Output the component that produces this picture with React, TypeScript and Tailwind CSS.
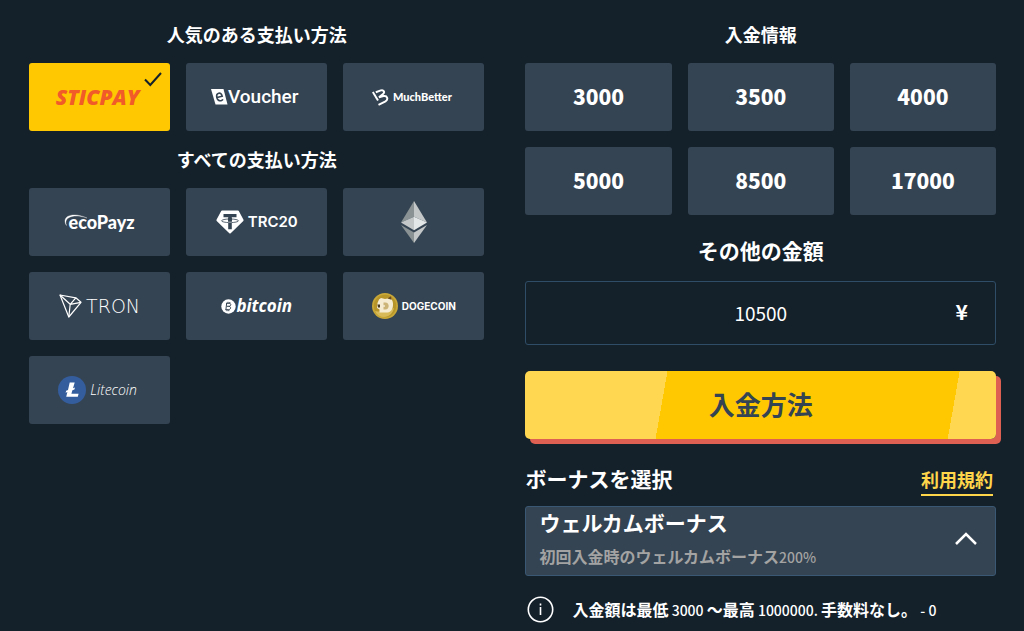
import { ReactNode, useState } from "react";
import clsx from "clsx";

interface PaymentMethod {
    id: string;
    label: string;
    logo: ReactNode;
}

interface SectionTitleProps {
    children: ReactNode;
}

interface MethodGridProps {
    methods: PaymentMethod[];
    selected: string;
    onSelect: (id: string) => void;
}

const AMOUNTS = [3000, 3500, 4000, 5000, 8500, 17000];

const popularMethods: PaymentMethod[] = [
    {
        id: "sticpay",
        label: "STICPAY",
        logo: (
            <span className="pr-1 font-['Open_Sans',sans-serif] text-[21px] leading-6 font-extrabold italic text-[#f15a29]">
                STICPAY
            </span>
        ),
    },
    {
        id: "evoucher",
        label: "eVoucher",
        logo: (
            <span className="flex items-center pr-1">
                <svg width="17" height="16" viewBox="0 0 17 16" fill="none" aria-hidden="true">
                    <path d="M0 0h12.5L16.500 15.500H4.500Z" fill="#fff" />
                    <path
                        d="M6 8.600 11.200 7.200C10.600 4.800 9.200 3.800 7.700 4.200 5.900 4.700 5.300 6.500 5.900 8.700c.6 2.300 2.300 3.500 4.100 3 .9-.2 1.600-.7 2-1.300"
                        stroke="#354452"
                        strokeWidth="1.600"
                    />
                </svg>
                <span className="font-['Roboto',sans-serif] text-[19px] leading-6 font-medium">Voucher</span>
            </span>
        ),
    },
    {
        id: "muchbetter",
        label: "MuchBetter",
        logo: (
            <span className="flex items-center gap-1 pr-1">
                <svg width="17" height="17" viewBox="0 0 17 17" fill="none" stroke="#fff" strokeWidth="2" aria-hidden="true">
                    <path d="M.8 3 6 11.500" />
                    <path d="M3.800 3.200 8.800 1.400c3-1 4.300 2 2.200 3.600L7 8.300l4.500-1.200c4-.7 5 3.400 2 5.200L6.500 15.800" />
                </svg>
                <span className="font-['Lato',sans-serif] text-[11px] leading-4 font-black">MuchBetter</span>
            </span>
        ),
    },
];

const allMethods: PaymentMethod[] = [
    {
        id: "ecopayz",
        label: "ecoPayz",
        logo: (
            <span className="relative pl-1 font-['Lato',sans-serif] text-[18px] leading-6 font-black">
                <svg className="absolute top-1 left-0" width="24" height="13" viewBox="0 0 24 13" fill="none" aria-hidden="true">
                    <path d="M2.500 11.500C-3.500 2 9-2.500 23 4 11-.2-1 2.500 2.500 11.500Z" fill="#fff" stroke="#fff" strokeWidth=".3" />
                </svg>
                ecoPayz
            </span>
        ),
    },
    {
        id: "trc20",
        label: "TRC20",
        logo: (
            <span className="flex items-center gap-1">
                <svg width="28" height="24" viewBox="0 0 28 24" aria-hidden="true">
                    <path d="M6 .5h16a1 1 0 0 1 .8.5l4.700 8.800a1 1 0 0 1-.2 1.100L14.700 23.200a1 1 0 0 1-1.400 0L.7 10.900a1 1 0 0 1-.2-1.100L5.200 1A1 1 0 0 1 6 .5Z" fill="#fff" />
                    <path d="M7.500 4h13v3.300h-4.700v12h-3.600v-12H7.500Z" fill="#354452" />
                    <ellipse cx="14" cy="10.800" rx="8.500" ry="1.800" fill="none" stroke="#354452" strokeWidth=".8" />
                    <path d="M12.200 8h3.600v3.500h-3.600Z" fill="#354452" />
                    <path d="M12.200 11.800h3.600v.6h-3.600Z" fill="#fff" />
                </svg>
                <span className="font-['Inter',sans-serif] text-[15px] leading-6 font-semibold">TRC20</span>
            </span>
        ),
    },
    {
        id: "ethereum",
        label: "Ethereum",
        logo: (
            <svg width="26" height="42" viewBox="0 0 26 42" aria-hidden="true">
                <path d="M13 0 0 21.500l13-5.800Z" fill="#8a9294" />
                <path d="M13 0v15.700l13 5.800Z" fill="#c3c7c8" />
                <path d="M13 15.700 0 21.500l13 7.700Z" fill="#c3c7c8" />
                <path d="m13 15.700 13 5.800-13 7.700Z" fill="#e4e7e7" />
                <path d="m0 24 13 7.600V42Z" fill="#8a9294" />
                <path d="M26 24 13 31.600V42Z" fill="#c3c7c8" />
            </svg>
        ),
    },
    {
        id: "tron",
        label: "TRON",
        logo: (
            <span className="flex items-center gap-1">
                <svg width="23" height="24" viewBox="0 0 23 24" fill="none" stroke="#fff" strokeWidth="1.200" strokeLinejoin="round" aria-hidden="true">
                    <path d="m1 1 15.800 2.800L22 8.300 9.800 23Z" />
                    <path d="m1 1 10.200 9.300L9.800 23M11.200 10.300 22 8.300M11.200 10.300l5.600-6.500" />
                </svg>
                <span className="font-['DejaVu_Sans',sans-serif] text-[19px] leading-6 font-extralight">TRON</span>
            </span>
        ),
    },
    {
        id: "bitcoin",
        label: "bitcoin",
        logo: (
            <span className="flex items-center">
                <svg width="15" height="15" viewBox="0 0 15 15" aria-hidden="true">
                    <circle cx="7.500" cy="7.500" r="7.200" fill="#fff" />
                    <path
                        d="m5.700 3.800-.8 7M5.400 4.300h2.800c2.300 0 2 3-.2 3H5.800M7.800 7.300c2.600 0 2.300 3.400-.4 3.400H4.400M7 2.800v1.500M8.800 3v1.500M6 10.700v1.500M7.800 10.700v1.500"
                        fill="none"
                        stroke="#354452"
                        strokeWidth="1"
                    />
                </svg>
                <span className="font-['Open_Sans',sans-serif] text-[17px] leading-6 font-bold italic">bitcoin</span>
            </span>
        ),
    },
    {
        id: "dogecoin",
        label: "DOGECOIN",
        logo: (
            <span className="flex items-center gap-1">
                <svg width="26" height="26" viewBox="0 0 26 26" aria-hidden="true">
                    <circle cx="13" cy="13" r="13" fill="#c9a838" />
                    <circle cx="13" cy="13" r="11.200" fill="#b89528" />
                    <path d="M3 18c5 1 12 1 19-3-1 5-5 9-10 9-4 0-7-2-9-6Z" fill="#d8bb58" />
                    <path d="M7 6.500 9 5l4 1 5-1c3 2 3.500 5.500 2.800 9-.6 3.500-3 5.500-6.300 5.500H7.500v-3L5 15l.5-5Z" fill="#f5ecd2" />
                    <path d="M5.500 11.500h2.500v3H6Z" fill="#4a3c20" />
                    <path d="M11.500 9.500h1.800c4.500 0 4.500 7 0 7h-1.800Z" fill="#cdb477" />
                    <path d="M9.500 13h3.500" stroke="#f5ecd2" strokeWidth="1.500" />
                    <path d="m15.500 5.500 3.500-2.200.5 3.500Z" fill="#6b4d22" />
                </svg>
                <span className="font-['Inter',sans-serif] text-[10px] leading-4 font-bold">DOGECOIN</span>
            </span>
        ),
    },
    {
        id: "litecoin",
        label: "Litecoin",
        logo: (
            <span className="flex items-center gap-1 pr-1">
                <svg width="28" height="28" viewBox="0 0 28 28" aria-hidden="true">
                    <circle cx="14" cy="14" r="14" fill="#345d9d" />
                    <path
                        d="M11.700 6.500h5l-1.700 5.700 2-.8-.6 2-2 .8-1 3.600h7.200l-.8 3H8.200l1.200-4.700-1.800.7.600-2.100 1.800-.7Z"
                        fill="#fff"
                    />
                </svg>
                <span className="font-['Open_Sans',sans-serif] text-[14px] leading-6 font-light italic">Litecoin</span>
            </span>
        ),
    },
];

function SectionTitle({ children }: SectionTitleProps) {
    return <h2 className="text-center text-[18px] leading-[27px] font-bold">{children}</h2>;
}

function MethodGrid({ methods, selected, onSelect }: MethodGridProps) {
    return (
        <div className="grid grid-cols-3 gap-4">
            {methods.map((method) => (
                <button
                    key={method.id}
                    type="button"
                    aria-label={method.label}
                    aria-pressed={method.id === selected}
                    onClick={() => onSelect(method.id)}
                    className={clsx(
                        "relative flex h-[68px] items-center justify-center rounded-[3px]",
                        method.id === selected ? "bg-[#ffc800]" : "bg-[#354452]"
                    )}
                >
                    {method.logo}
                    {method.id === selected && (
                        <svg
                            className="absolute top-2 right-2"
                            width="18"
                            height="16"
                            viewBox="0 0 18 16"
                            fill="none"
                            stroke="#14212b"
                            strokeWidth="2"
                            aria-hidden="true"
                        >
                            <path d="m1 8.500 5.300 5.500L17 2" />
                        </svg>
                    )}
                </button>
            ))}
        </div>
    );
}

export default function App() {
    const [method, setMethod] = useState("sticpay");
    const [amount, setAmount] = useState("10500");
    const [bonusOpen, setBonusOpen] = useState(true);

    return (
        <main className="grid min-h-screen grid-cols-[455fr_470fr] items-start gap-x-[41px] bg-[#14212b] pt-[21px] pr-7 pl-[29px] font-['Noto_Sans_CJK_JP','Noto_Sans',sans-serif] text-white">
            <section className="flex flex-col gap-[15px]">
                <SectionTitle>人気のある支払い方法</SectionTitle>
                <MethodGrid methods={popularMethods} selected={method} onSelect={setMethod} />
                <SectionTitle>すべての支払い方法</SectionTitle>
                <MethodGrid methods={allMethods} selected={method} onSelect={setMethod} />
            </section>

            <section className="flex flex-col">
                <SectionTitle>入金情報</SectionTitle>
                <div className="mt-[15px] grid grid-cols-3 gap-4">
                    {AMOUNTS.map((value) => (
                        <button
                            key={value}
                            type="button"
                            onClick={() => setAmount(String(value))}
                            className="h-[68px] rounded-[3px] bg-[#354452] pb-[2px] text-[21px] leading-7 font-black"
                        >
                            {value}
                        </button>
                    ))}
                </div>

                <label htmlFor="amount" className="mt-[21px] text-center text-[21px] leading-7 font-bold">
                    その他の金額
                </label>
                <div className="relative mt-[17px]">
                    <input
                        id="amount"
                        type="text"
                        inputMode="numeric"
                        value={amount}
                        onChange={(e) => setAmount(e.target.value)}
                        className="h-16 w-full rounded-[3px] border border-[#2f4d66] bg-transparent pb-[2px] text-center text-[19px]"
                    />
                    <span className="absolute top-4 right-7 text-[21px] leading-7 font-bold">¥</span>
                </div>

                <button
                    type="submit"
                    className="mt-[26px] h-[68px] rounded-[5px] bg-[linear-gradient(100deg,#ffd750_29.5%,#ffc800_29.5%,#ffc800_90%,#ffd750_90%)] pb-1 text-[26px] font-bold text-[#354452] shadow-[5px_5px_0_#de6053]"
                >
                    入金方法
                </button>

                <div className="mt-[25px] flex items-start justify-between pr-[3px]">
                    <h2 className="text-[21px] leading-7 font-bold">ボーナスを選択</h2>
                    <a href="#terms" className="border-b-2 border-[#ffd54a] text-[18px] leading-[30px] font-bold text-[#ffd54a]">
                        利用規約
                    </a>
                </div>
                <button
                    type="button"
                    aria-expanded={bonusOpen}
                    onClick={() => setBonusOpen(!bonusOpen)}
                    className="mt-[10px] flex items-center justify-between rounded-[3px] border border-[#3a5873] bg-[#354452] pt-px pr-[18px] pb-[6px] pl-[13px] text-left"
                >
                    <span className="flex flex-col gap-2">
                        <span className="text-[21px] leading-7 font-bold">ウェルカムボーナス</span>
                        <span className="leading-6 text-[#a3a3a3]">
                            <span className="text-[16px] font-bold">初回入金時のウェルカムボーナス</span>
                            <span className="text-[14px] font-medium">200%</span>
                        </span>
                    </span>
                    <svg width="22" height="13" viewBox="0 0 22 13" fill="none" stroke="#fff" strokeWidth="2.500" aria-hidden="true">
                        <path d={bonusOpen ? "M1 12 11 2l10 10" : "M1 1l10 10L21 1"} />
                    </svg>
                </button>

                <div className="mt-[20px] flex items-center gap-[18px] pl-[2px]">
                    <svg width="27" height="27" viewBox="0 0 27 27" fill="none" stroke="#fff" strokeWidth="1.600" aria-hidden="true">
                        <circle cx="13.500" cy="13.500" r="12.200" />
                        <path d="M13.500 11v8M13.500 7.500v2" />
                    </svg>
                    <p className="text-[14px] leading-6 font-medium">
                        <span className="text-[16px] font-bold">入金額は最低</span> 3000{" "}
                        <span className="text-[16px] font-bold">～最高</span> 1000000.{" "}
                        <span className="text-[16px] font-bold">手数料なし。</span> - 0
                    </p>
                </div>
            </section>
        </main>
    );
}
